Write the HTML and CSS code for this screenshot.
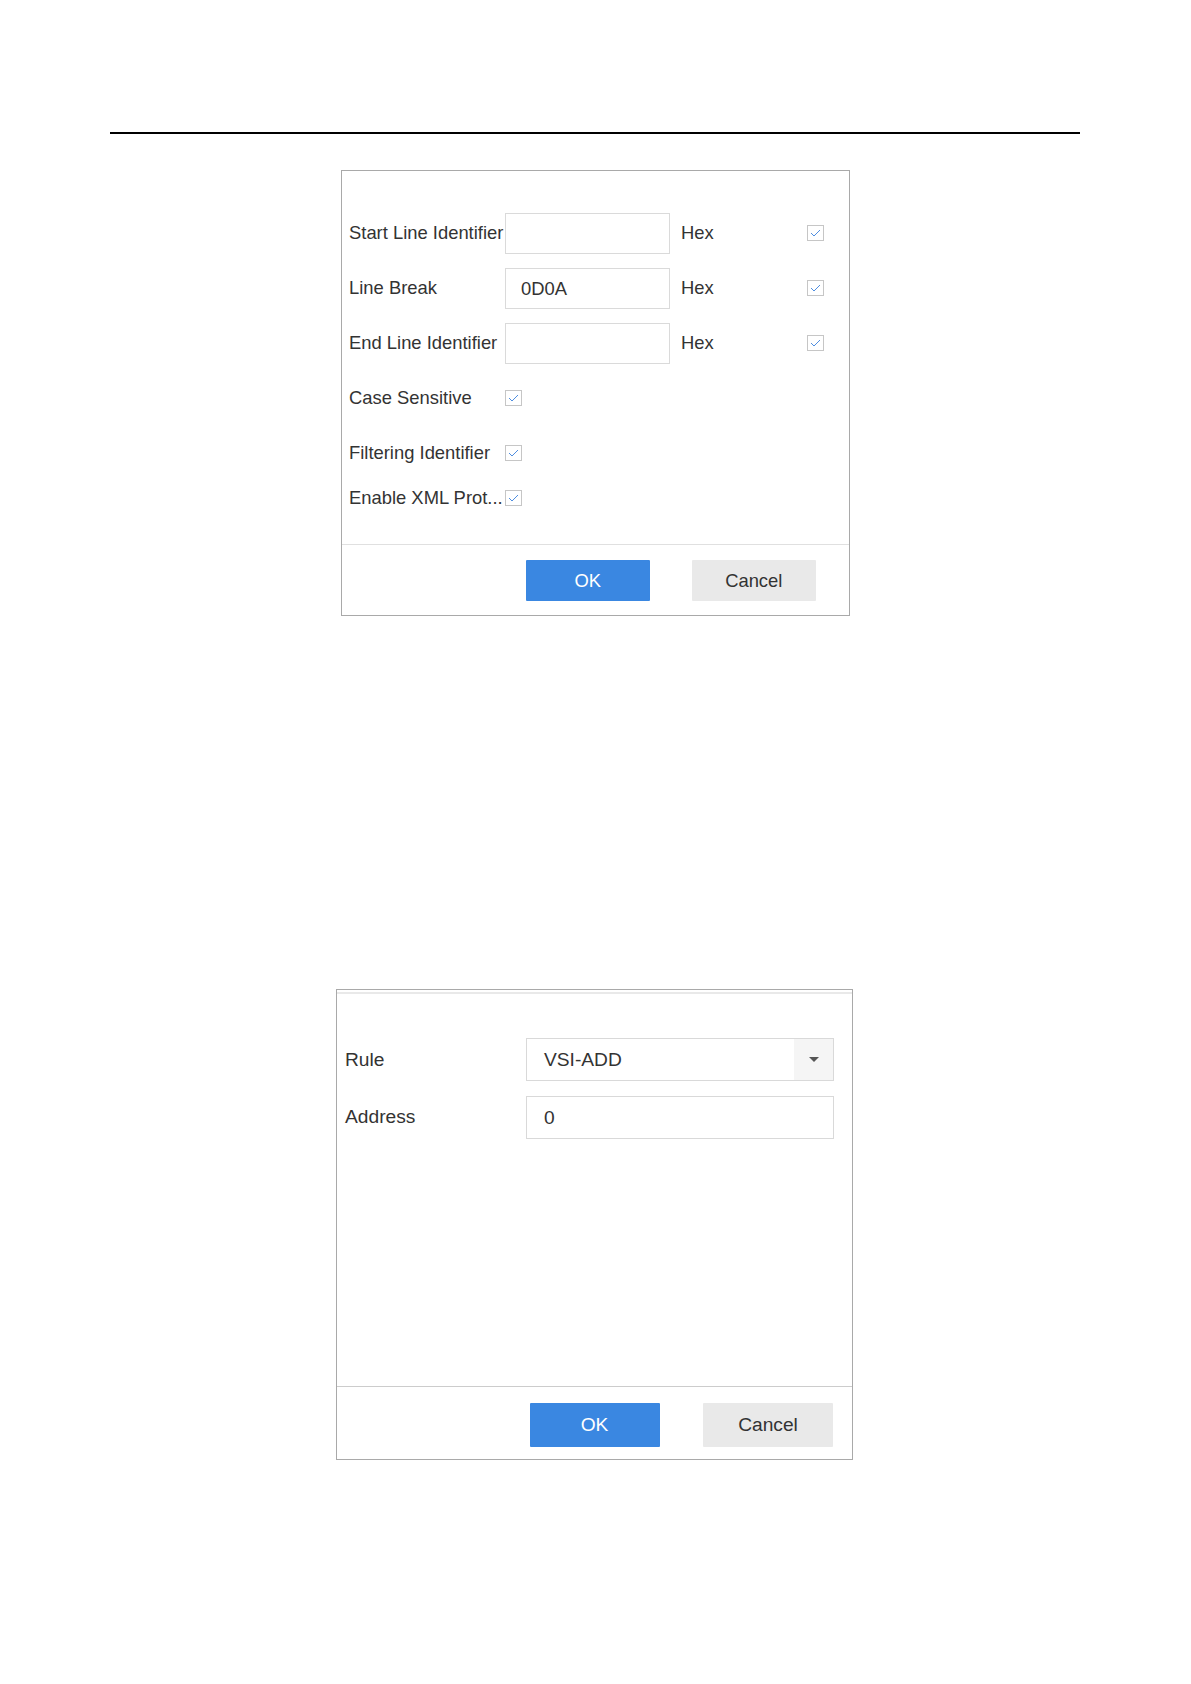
FILE: index.html
```html
<!DOCTYPE html>
<html lang="en">
<head>
<meta charset="utf-8">
<title>Dialogs</title>
<link rel="stylesheet" href="styles.css">
</head>
<body>
<div class="page">
  <div class="top-rule"></div>

  <div class="dialog dialog-a">
    <div class="body-a">
      <div class="row">
        <div class="label">Start Line Identifier</div>
        <div class="input"></div>
        <div class="hex">Hex</div>
        <span class="check"><svg width="17" height="16" viewBox="0 0 17 16"><rect x="0.5" y="0.5" width="16" height="15" fill="#fff" stroke="#c6c6c6"/><polyline points="4,8 7,11 13,5" fill="none" stroke="#4f8ee0" stroke-width="1"/></svg></span>
      </div>
      <div class="row">
        <div class="label">Line Break</div>
        <div class="input">0D0A</div>
        <div class="hex">Hex</div>
        <span class="check"><svg width="17" height="16" viewBox="0 0 17 16"><rect x="0.5" y="0.5" width="16" height="15" fill="#fff" stroke="#c6c6c6"/><polyline points="4,8 7,11 13,5" fill="none" stroke="#4f8ee0" stroke-width="1"/></svg></span>
      </div>
      <div class="row">
        <div class="label">End Line Identifier</div>
        <div class="input"></div>
        <div class="hex">Hex</div>
        <span class="check"><svg width="17" height="16" viewBox="0 0 17 16"><rect x="0.5" y="0.5" width="16" height="15" fill="#fff" stroke="#c6c6c6"/><polyline points="4,8 7,11 13,5" fill="none" stroke="#4f8ee0" stroke-width="1"/></svg></span>
      </div>
      <div class="row row-case">
        <div class="label">Case Sensitive</div>
        <span class="check"><svg width="17" height="16" viewBox="0 0 17 16"><rect x="0.5" y="0.5" width="16" height="15" fill="#fff" stroke="#c6c6c6"/><polyline points="4,8 7,11 13,5" fill="none" stroke="#4f8ee0" stroke-width="1"/></svg></span>
      </div>
      <div class="row">
        <div class="label">Filtering Identifier</div>
        <span class="check"><svg width="17" height="16" viewBox="0 0 17 16"><rect x="0.5" y="0.5" width="16" height="15" fill="#fff" stroke="#c6c6c6"/><polyline points="4,8 7,11 13,5" fill="none" stroke="#4f8ee0" stroke-width="1"/></svg></span>
      </div>
      <div class="row row-xml">
        <div class="label">Enable XML Prot...</div>
        <span class="check"><svg width="17" height="16" viewBox="0 0 17 16"><rect x="0.5" y="0.5" width="16" height="15" fill="#fff" stroke="#c6c6c6"/><polyline points="4,8 7,11 13,5" fill="none" stroke="#4f8ee0" stroke-width="1"/></svg></span>
      </div>
    </div>
    <div class="footer footer-a">
      <div class="btn btn-ok">OK</div>
      <div class="btn btn-cancel">Cancel</div>
    </div>
  </div>

  <div class="dialog dialog-b">
    <div class="head-b"></div>
    <div class="body-b">
      <div class="row-b">
        <div class="label-b">Rule</div>
        <div class="select">
          <span class="select-value">VSI-ADD</span>
          <span class="select-arrow"><svg width="10" height="5" viewBox="0 0 10 5"><polygon points="0,0 10,0 5,5" fill="#555"/></svg></span>
        </div>
      </div>
      <div class="row-b">
        <div class="label-b">Address</div>
        <div class="input-b">0</div>
      </div>
    </div>
    <div class="footer footer-b">
      <div class="btn btn-ok">OK</div>
      <div class="btn btn-cancel">Cancel</div>
    </div>
  </div>
</div>
</body>
</html>
```

FILE: styles.css
```css
html, body {
  margin: 0;
  padding: 0;
  background: #fff;
}

body {
  font-family: "Liberation Sans", Arial, sans-serif;
  color: #333;
}

.page {
  width: 1191px;
  height: 1684px;
  overflow: hidden;
}

.top-rule {
  margin: 132px 0 0 110px;
  width: 970px;
  height: 2px;
  background: #000;
}

.dialog {
  box-sizing: border-box;
  border: 1px solid #a9a9a9;
  background: #fff;
}

/* ---------- dialog A ---------- */
.dialog-a {
  margin: 36px 0 0 341px;
  width: 509px;
  font-size: 18.4px;
}

.body-a {
  box-sizing: border-box;
  height: 373px;
  padding: 41.5px 0 0 7px;
}

.row {
  display: flex;
  align-items: center;
  height: 41px;
}

.row + .row {
  margin-top: 14px;
}

.row + .row-case {
  margin-top: 13.5px;
}

.row + .row-xml {
  margin-top: 4.5px;
}

.label {
  width: 155.5px;
  flex: none;
  white-space: nowrap;
  overflow: hidden;
}

.input {
  box-sizing: border-box;
  width: 165.5px;
  height: 41px;
  border: 1px solid #dadada;
  padding-left: 15.5px;
  line-height: 39px;
  flex: none;
}

.hex {
  margin-left: 11px;
  width: 126px;
  flex: none;
}

.check {
  display: flex;
  width: 17px;
  height: 16px;
  flex: none;
}

.footer {
  display: flex;
  justify-content: flex-end;
  border-top: 1px solid #e0e0e0;
}

.footer-a {
  padding: 15px 33px 14px 0;
  gap: 41.5px;
}

.btn {
  box-sizing: border-box;
  display: flex;
  align-items: center;
  justify-content: center;
  border-radius: 1px;
}

.footer-a .btn {
  width: 124.5px;
  height: 41px;
}

.btn-ok {
  background: #3a87e1;
  color: #fff;
}

.btn-cancel {
  background: #e9e9e9;
  color: #333;
}

/* ---------- dialog B ---------- */
.dialog-b {
  margin: 373px 0 0 336px;
  width: 517px;
  font-size: 19.2px;
}

.head-b {
  height: 2px;
  border-bottom: 2px solid #e9e9e9;
}

.body-b {
  box-sizing: border-box;
  height: 392px;
  padding: 44px 0 0 8px;
}

.row-b {
  display: flex;
  align-items: center;
  height: 43px;
}

.row-b + .row-b {
  margin-top: 14.5px;
}

.label-b {
  width: 181px;
  flex: none;
}

.select,
.input-b {
  box-sizing: border-box;
  width: 308px;
  height: 43px;
  border: 1px solid #d9d9d9;
  flex: none;
}

.select {
  display: flex;
  align-items: stretch;
}

.select-value {
  flex: 1;
  padding-left: 17px;
  line-height: 41px;
}

.select-arrow {
  width: 39px;
  background: #f5f5f5;
  display: flex;
  align-items: center;
  justify-content: center;
}

.input-b {
  padding-left: 17px;
  line-height: 41px;
}

.footer-b {
  border-top-color: #cccccc;
  padding: 16px 19px 12px 0;
  gap: 43.5px;
}

.footer-b .btn {
  width: 130px;
  height: 43.5px;
}
```
